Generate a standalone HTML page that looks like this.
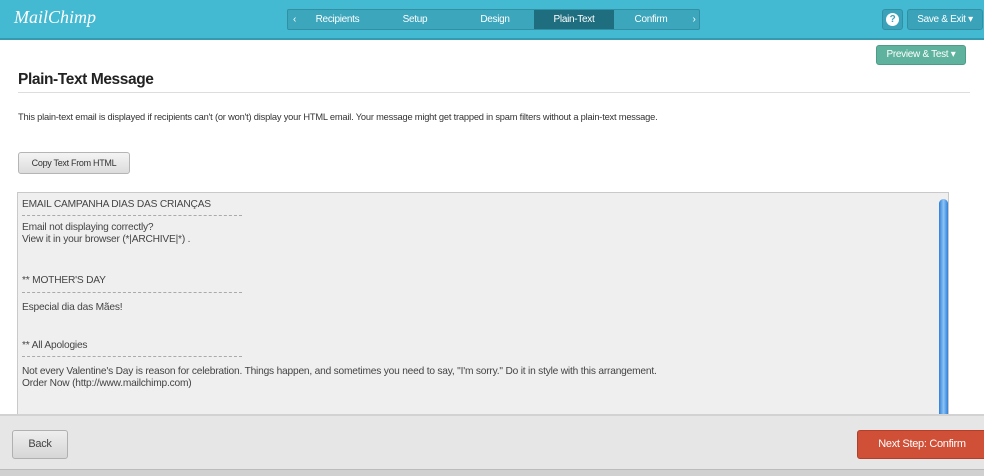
<!DOCTYPE html>
<html><head><style>
*{margin:0;padding:0;box-sizing:border-box}
body{width:984px;height:476px;overflow:hidden;background:#fff;font-family:"Liberation Sans",sans-serif;position:relative;color:#333}
.hdr{position:absolute;left:0;top:0;width:984px;height:40px;background:#44b9d2;border-bottom:2px solid #3599b0}
.logo{position:absolute;left:14px;top:7px;font-family:"Liberation Serif",serif;font-style:italic;color:#fff;font-size:18px}
.crumb{position:absolute;left:287px;top:9px;height:21px;width:413px;background:#3ca6bd;border:1px solid #3290a5;border-radius:2px;font-size:10px;color:#fff;letter-spacing:-.3px}
.crumb span{position:absolute;top:0;height:19px;line-height:19px;text-align:center}
.act{background:#1f6e80}
.btn{position:absolute;border-radius:3px;font-size:10px;text-align:center;letter-spacing:-.3px}
.abs{position:absolute}
.ta{position:absolute;left:17px;top:192px;width:932px;height:224px;background:#efefef;border:1px solid #c9c9c9}
.l{position:absolute;left:22px;font-size:10.2px;color:#444;line-height:14px;letter-spacing:-.2px;white-space:nowrap}
.d{position:absolute;left:22px;width:220px;border-top:1px dashed #aaa}
</style></head><body>
<div class="hdr">
<div class="logo">MailChimp</div>
<div class="crumb">
<span style="left:0;width:13px">‹</span>
<span style="left:13px;width:73px">Recipients</span>
<span style="left:86px;width:82px">Setup</span>
<span style="left:168px;width:78px">Design</span>
<span class="act" style="left:246px;width:80px">Plain-Text</span>
<span style="left:326px;width:74px">Confirm</span>
<span style="left:400px;width:12px">›</span>
</div>
<div class="btn" style="left:882px;top:9px;width:21px;height:21px;background:#3aa3ba;border:1px solid #3290a5"><div style="margin:3px auto;width:13px;height:13px;border-radius:50%;background:#fff;color:#3aa3ba;font-weight:bold;font-size:10px;line-height:13px">?</div></div>
<div class="btn" style="left:907px;top:9px;width:76px;height:21px;background:#3aa3ba;border:1px solid #3290a5;color:#fff;line-height:19px">Save &amp; Exit ▾</div>
</div>
<div class="btn" style="left:876px;top:45px;width:90px;height:20px;background:#5fb39e;border:1px solid #4e9c88;color:#fff;line-height:18px">Preview &amp; Test ▾</div>
<div class="abs" style="left:18px;top:71px;font-size:15.5px;font-weight:bold;color:#222;letter-spacing:-.4px">Plain-Text Message</div>
<div class="abs" style="left:18px;top:92px;width:952px;height:1px;background:#ddd"></div>
<div class="abs" style="left:18px;top:112px;font-size:9.3px;color:#333;letter-spacing:-.2px">This plain-text email is displayed if recipients can't (or won't) display your HTML email. Your message might get trapped in spam filters without a plain-text message.</div>
<div class="btn" style="left:18px;top:152px;width:112px;height:22px;background:linear-gradient(#f4f4f4,#dcdcdc);border:1px solid #b5b5b5;line-height:20px;font-size:9px;color:#333">Copy Text From HTML</div>
<div class="ta"></div>
<div class="l" style="top:198px">EMAIL CAMPANHA DIAS DAS CRIANÇAS</div>
<div class="d" style="top:215px"></div>
<div class="l" style="top:221px">Email not displaying correctly?</div>
<div class="l" style="top:233px">View it in your browser (*|ARCHIVE|*) .</div>
<div class="l" style="top:274px">** MOTHER'S DAY</div>
<div class="d" style="top:292px"></div>
<div class="l" style="top:301px">Especial dia das Mães!</div>
<div class="l" style="top:339px">** All Apologies</div>
<div class="d" style="top:356px"></div>
<div class="l" style="top:365px">Not every Valentine's Day is reason for celebration. Things happen, and sometimes you need to say, "I'm sorry." Do it in style with this arrangement.</div>
<div class="l" style="top:377px">Order Now (http://www.mailchimp.com)</div>
<div class="abs" style="left:939px;top:199px;width:9px;height:217px;border-radius:5px 5px 0 0;background:linear-gradient(90deg,#2f7fd8,#8cc4f4,#2f7fd8)"></div>
<div class="abs" style="left:0;top:414px;width:984px;height:56px;background:#e6e6e6;border-top:2px solid #d2d2d2"></div>
<div class="abs" style="left:0;top:469px;width:984px;height:7px;background:#d0d0d0;border-top:1px solid #bbb"></div>
<div class="btn" style="left:12px;top:430px;width:56px;height:29px;background:linear-gradient(#eee,#d6d6d6);border:1px solid #b0b0b0;line-height:27px;font-size:11px;color:#444">Back</div>
<div class="btn" style="left:857px;top:430px;width:130px;height:29px;background:#cf4f37;border:1px solid #b23f2a;line-height:27px;font-size:11px;color:#fff">Next Step: Confirm</div>
</body></html>
